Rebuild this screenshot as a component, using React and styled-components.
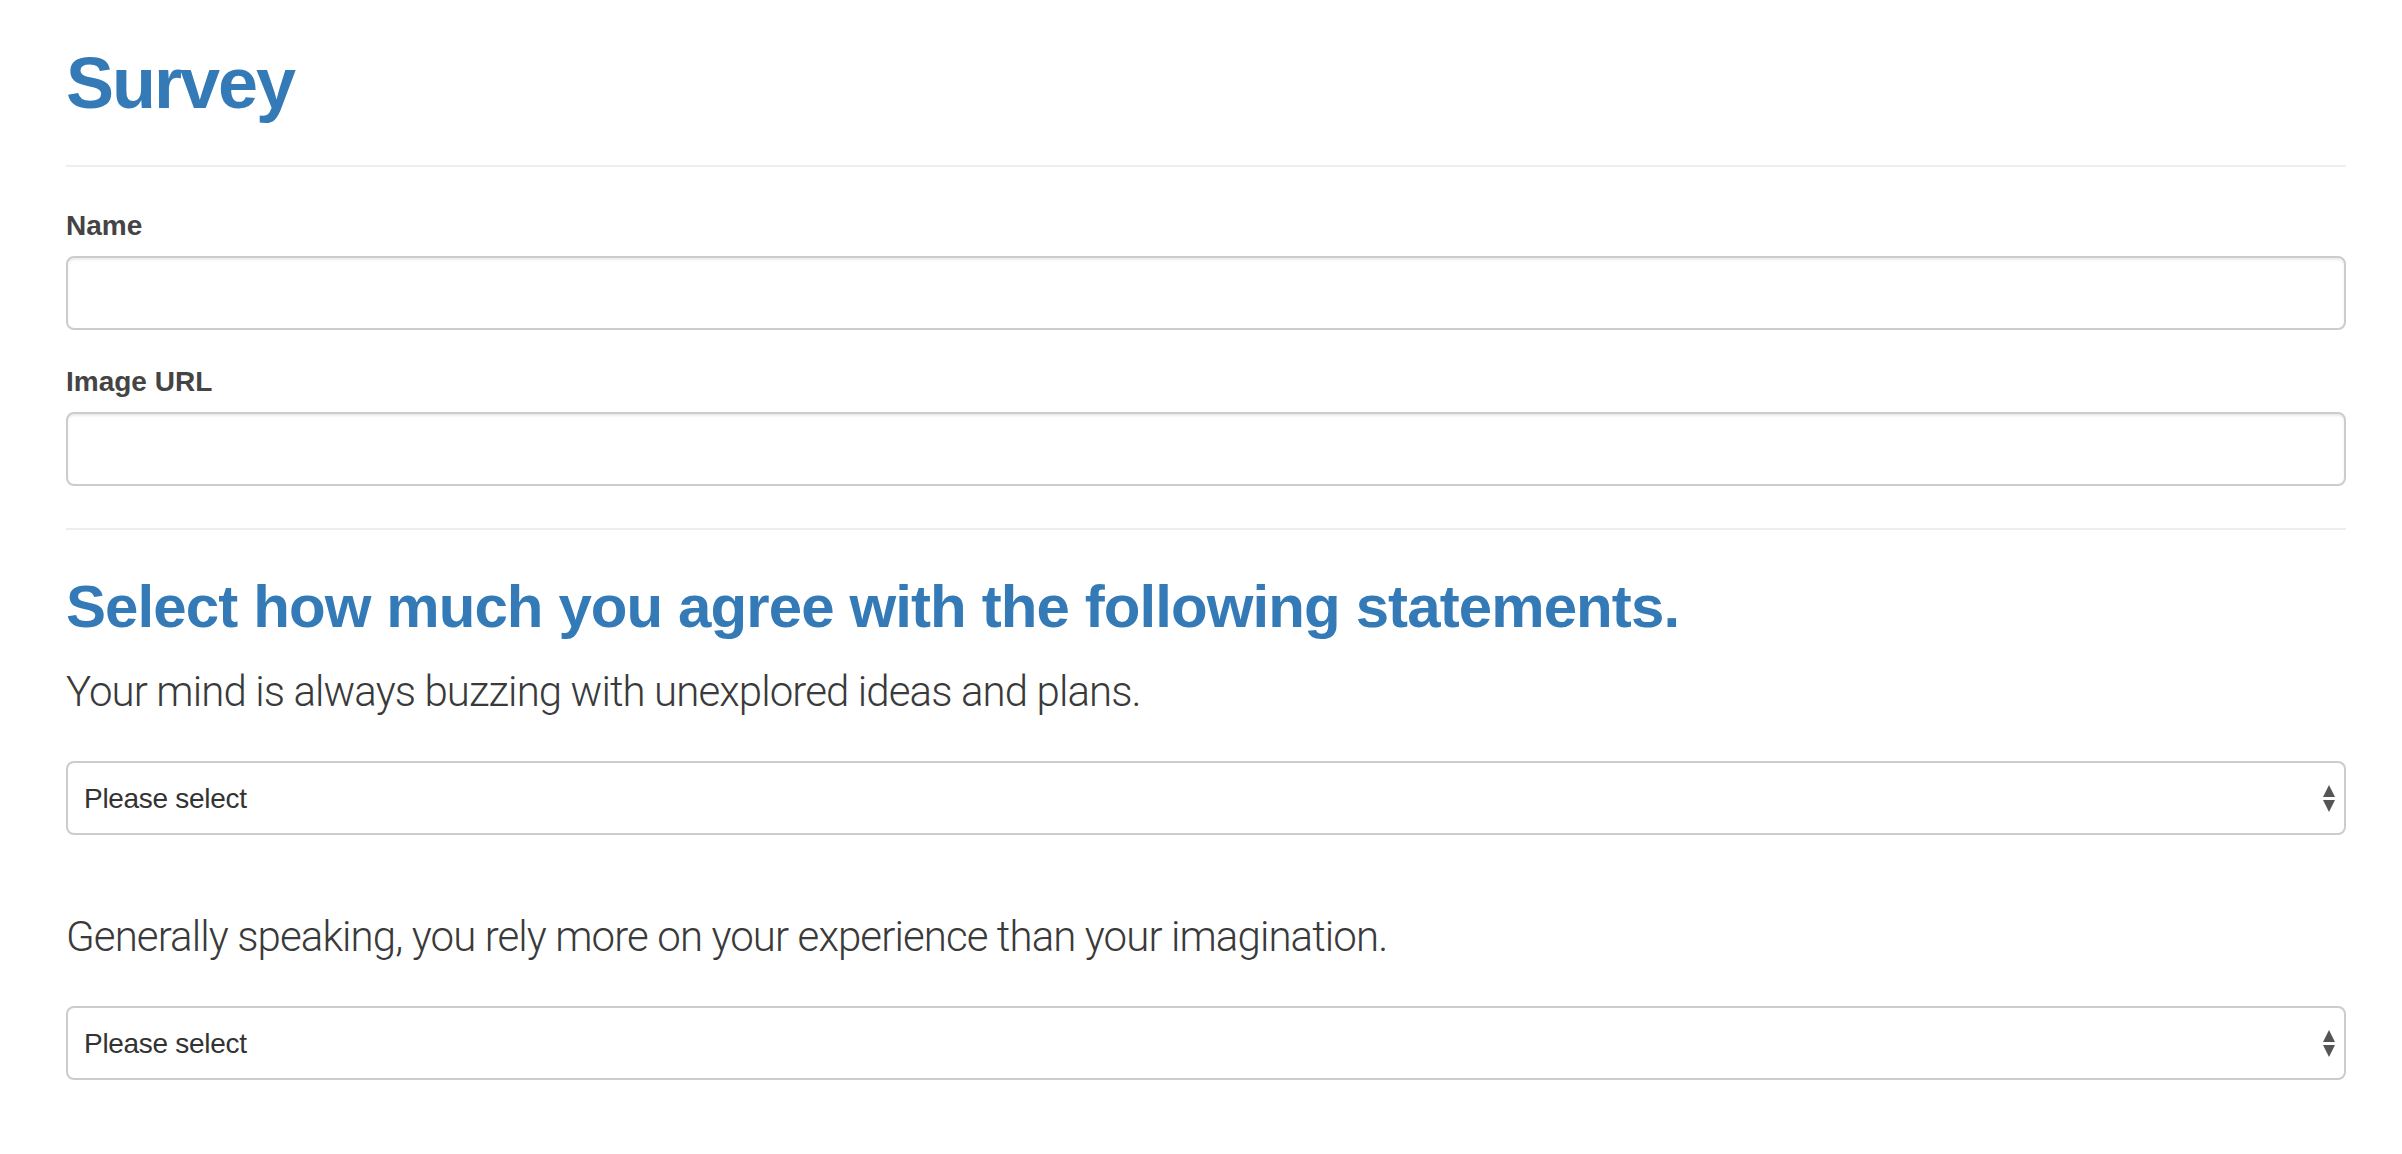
import React from 'react';
import styled, { createGlobalStyle } from 'styled-components';

const GlobalStyle = createGlobalStyle`
  body {
    margin: 0;
    background: #fff;
    color: #333;
    font-family: "Liberation Sans", Helvetica, Arial, sans-serif;
  }
`;

const Page = styled.div`
  padding: 0 56px 0 66px;
`;

const Title = styled.h1`
  margin: 44px 0 0;
  font-size: 72px;
  line-height: 79px;
  font-weight: 700;
  letter-spacing: -2px;
  color: #337ab7;
`;

const Rule = styled.hr`
  border: 0;
  border-top: 2px solid #eee;
  height: 0;
  margin: 42px 0 ${p => p.$bottom || 0}px;
`;

const FormGroup = styled.div`
  margin-bottom: 32px;
`;

const Label = styled.label`
  display: block;
  font-size: 28px;
  line-height: 40px;
  font-weight: 700;
  margin-bottom: 10px;
  color: #444;
`;

const TextInput = styled.input`
  display: block;
  box-sizing: border-box;
  width: 100%;
  height: 74px;
  border: 2px solid #ccc;
  border-radius: 8px;
  box-shadow: inset 0 2px 2px rgba(0, 0, 0, 0.075);
  padding: 0 24px;
  font: 28px "Liberation Sans", Helvetica, Arial, sans-serif;
  color: #555;
  outline: none;
`;

const Heading = styled.h2`
  margin: 44px 0 22px;
  font-size: 60px;
  line-height: 66px;
  font-weight: 700;
  letter-spacing: -0.9px;
  color: #337ab7;
`;

const Question = styled.div`
  margin-bottom: 72px;
`;

const Lead = styled.p`
  margin: 0 0 40px;
  font-family: Roboto, "Liberation Sans", sans-serif;
  font-size: 42px;
  line-height: 59px;
  font-weight: 300;
  letter-spacing: -0.9px;
  color: #3a3a3a;
`;

const SelectWrap = styled.div`
  position: relative;
`;

const Select = styled.select`
  display: block;
  box-sizing: border-box;
  width: 100%;
  height: 74px;
  appearance: none;
  -webkit-appearance: none;
  background: #fff;
  border: 2px solid #ccc;
  border-radius: 8px;
  padding: 0 40px 0 16px;
  font: 28px "Liberation Sans", Helvetica, Arial, sans-serif;
  letter-spacing: -0.3px;
  color: #333;
  outline: none;
`;

const Arrows = styled.svg`
  position: absolute;
  right: 11px;
  top: 23px;
  pointer-events: none;
`;

const options = [
  'Please select',
  'Strongly disagree',
  'Disagree',
  'Neutral',
  'Agree',
  'Strongly agree',
];

const questions = [
  'Your mind is always buzzing with unexplored ideas and plans.',
  'Generally speaking, you rely more on your experience than your imagination.',
];

function Dropdown() {
  return (
    <SelectWrap>
      <Select defaultValue="">
        {options.map((o, i) => (
          <option key={o} value={i === 0 ? '' : o}>{o}</option>
        ))}
      </Select>
      <Arrows width="12" height="28" viewBox="0 0 12 28">
        <path d="M0 13 L6 1 L12 13 Z" fill="#555" />
        <path d="M0 16 L12 16 L6 28 Z" fill="#555" />
      </Arrows>
    </SelectWrap>
  );
}

export default function App() {
  return (
    <Page>
      <GlobalStyle />
      <Title>Survey</Title>
      <Rule $bottom={39} />
      <FormGroup>
        <Label htmlFor="name">Name</Label>
        <TextInput id="name" type="text" />
      </FormGroup>
      <FormGroup>
        <Label htmlFor="photo">Image URL</Label>
        <TextInput id="photo" type="text" />
      </FormGroup>
      <Rule />
      <Heading>Select how much you agree with the following statements.</Heading>
      {questions.map(q => (
        <Question key={q}>
          <Lead>{q}</Lead>
          <Dropdown />
        </Question>
      ))}
    </Page>
  );
}
